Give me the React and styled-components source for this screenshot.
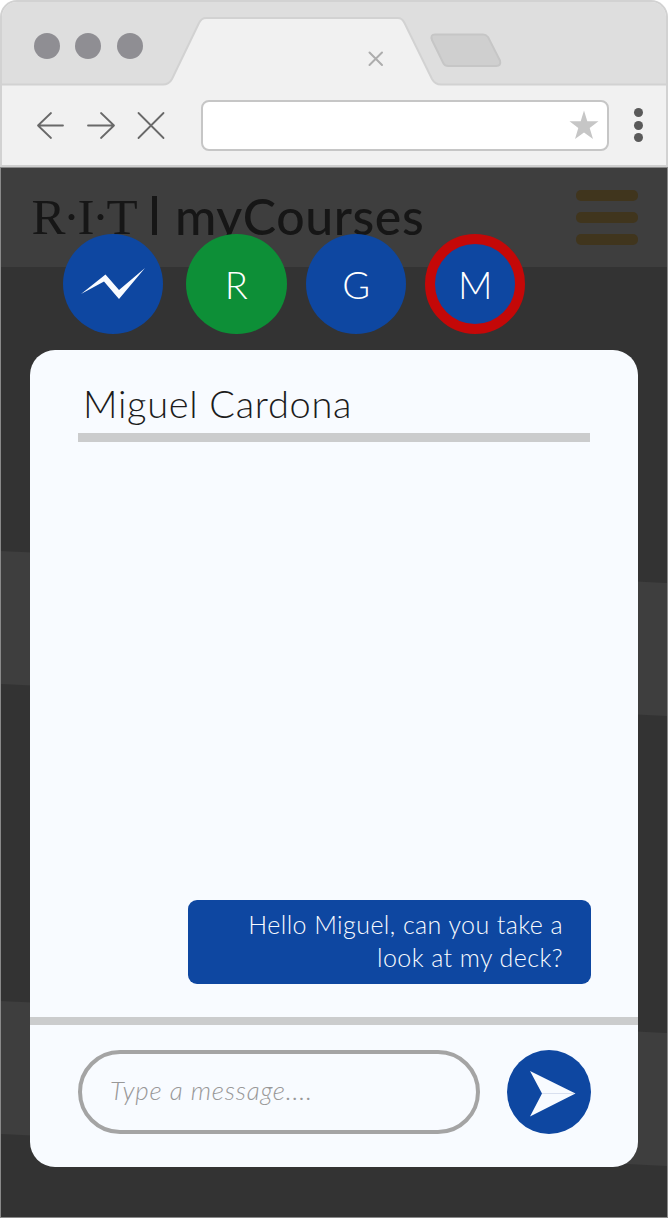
import React from 'react';
import styled, { createGlobalStyle } from 'styled-components';

const GlobalStyle = createGlobalStyle`
  * { box-sizing: border-box; }
  body { margin: 0; background: #fff; font-family: Lato, "Open Sans", sans-serif; font-weight: 300; }
`;

const Browser = styled.div`
  width: 668px;
  height: 1218px;
  display: flex;
  flex-direction: column;
  overflow: hidden;
`;

const Chrome = styled.header`
  flex: none;
  height: 167px;
  display: flex;
  flex-direction: column;
  position: relative;
  background: #f1f1f1;
  border: 2px solid #d2d2d2;
  border-bottom-color: #cfcfcf;
  border-radius: 17px 17px 0 0;
  overflow: hidden;
`;

const TabStrip = styled.div`
  height: 84px;
  flex: none;
  position: relative;
  background: #dedede;
`;

const TabShapes = styled.svg`
  position: absolute;
  left: -2px;
  top: -2px;
`;

const WindowDots = styled.div`
  display: flex;
  gap: 15.6px;
  padding: 31px 0 0 31.5px;
`;

const WindowDot = styled.span`
  width: 26px;
  height: 26px;
  border-radius: 50%;
  background: #8f8e93;
`;

const Toolbar = styled.div`
  flex: 1;
  display: flex;
  align-items: flex-start;
  padding: 14px 0 0 32px;
`;

const NavIcons = styled.svg`
  flex: none;
  margin-top: 8px;
`;

const AddressBar = styled.div`
  width: 408.5px;
  height: 50.5px;
  margin-left: 32.5px;
  display: flex;
  align-items: center;
  justify-content: flex-end;
  padding-right: 8px;
  background: #fff;
  border: 2px solid #c6c6c6;
  border-radius: 8px;
`;

const MenuDots = styled.div`
  display: flex;
  flex-direction: column;
  gap: 3.5px;
  margin: 8px 0 0 24.5px;
`;

const MenuDot = styled.span`
  width: 9px;
  height: 9px;
  border-radius: 50%;
  background: #5a5a5a;
`;

const Page = styled.main`
  flex: 1;
  position: relative;
  display: flex;
  flex-direction: column;
  background: #333;
  border: 1px solid #8a8a8a;
`;

const Band = styled.div`
  position: absolute;
  left: 0;
  right: 0;
  top: ${(p) => p.$top}px;
  height: 165px;
  background: #3e3e3e;
  clip-path: polygon(0 0, 100% 32px, 100% 100%, 0 133px);
`;

const SiteHeader = styled.div`
  flex: none;
  height: 99px;
  display: flex;
  align-items: flex-start;
  justify-content: space-between;
  padding: 0 29px 0 30.5px;
  background: #3e3e3e;
  position: relative;
`;

const Brand = styled.div`
  display: flex;
  color: #161616;
  white-space: nowrap;
`;

const School = styled.span`
  width: 120.5px;
  padding-top: 19px;
  font: 400 51px/60px "Liberation Serif", serif;
  letter-spacing: -2.5px;
`;

const Divider = styled.span`
  width: 4.5px;
  height: 39px;
  margin-top: 28px;
  background: #161616;
`;

const Product = styled.span`
  padding: 18px 0 0 18.5px;
  font-size: 50px;
  line-height: 60px;
  font-weight: 500;
  letter-spacing: 0.6px;
`;

const Burger = styled.div`
  display: flex;
  flex-direction: column;
  gap: 11px;
  margin-top: 22px;
`;

const BurgerLine = styled.span`
  width: 62.5px;
  height: 11px;
  border-radius: 5px;
  background: #40351d;
`;

const Contacts = styled.nav`
  position: relative;
  display: flex;
  flex: none;
  margin-top: -33.4px;
  padding-left: 62px;
`;

const Avatar = styled.div`
  width: 100.4px;
  height: 100.4px;
  margin-right: ${(p) => p.$gap || 0}px;
  display: flex;
  align-items: center;
  justify-content: center;
  border-radius: 50%;
  color: #fff;
  font-size: 38px;
  background: ${(p) => (p.$online ? '#0d8f37' : '#0e47a1')};
  border: ${(p) => (p.$active ? '10px solid #c40808' : 'none')};
`;

const Chat = styled.section`
  position: relative;
  flex: none;
  width: 608.5px;
  height: 817px;
  margin: 16px 0 0 28.5px;
  display: flex;
  flex-direction: column;
  background: #f8fbff;
  border-radius: 25px;
`;

const ChatTitle = styled.h1`
  flex: none;
  width: 512px;
  height: 92px;
  margin: 0 0 0 48.5px;
  padding: 30px 0 0 5px;
  border-bottom: 9px solid #cbcccd;
  color: #1c1c1c;
  font-size: 38px;
  line-height: 46px;
  font-weight: 300;
  letter-spacing: 0.7px;
`;

const Messages = styled.div`
  flex: 1;
  display: flex;
  flex-direction: column;
  justify-content: flex-end;
  align-items: flex-end;
  padding: 0 47px 33px;
`;

const Bubble = styled.p`
  margin: 0;
  width: 403px;
  height: 84px;
  padding: 8px 28px 0 0;
  border-radius: 9px;
  background: #0e47a1;
  color: #f8fbff;
  font-size: 25px;
  line-height: 33px;
  letter-spacing: 0.42px;
  text-align: right;
`;

const Composer = styled.div`
  flex: none;
  height: 150px;
  display: flex;
  gap: 27px;
  padding: 25px 0 0 48.5px;
  border-top: 8px solid #cbcccd;
`;

const MessageField = styled.div`
  width: 402px;
  height: 84px;
  padding: 17px 0 0 28px;
  border: 4.5px solid #a4a4a4;
  border-radius: 42px;
  color: #989898;
  font-size: 26px;
  line-height: 38px;
  font-style: italic;
  letter-spacing: 0.75px;
`;

const SendButton = styled.div`
  width: 84px;
  height: 84px;
  border-radius: 50%;
  background: #0e47a1;
`;

export default function App() {
  return (
    <>
      <GlobalStyle />
      <Browser>
        <Chrome>
          <TabStrip>
            <TabShapes width="668" height="87" viewBox="0 0 668 87" strokeWidth="2">
              <path
                d="M0 84.5H163Q169 84.5 172 79L199 23Q201.500 18 206 18H398Q402 18 404.500 23L432 79Q435 84.500 441 84.500H668V90H0Z"
                fill="#f1f1f1"
                stroke="#d2d2d2"
              />
              <path
                d="M435 34.500H483Q486 34.500 488 37L500 60.500Q501.500 66 496 66H448Q445 66 443.500 63.500L432 40Q430 34.500 435 34.500Z"
                fill="#cfcfcf"
                stroke="#c6c6c6"
              />
              <path d="M369.500 52.500L382 65M382 52.500L369.500 65" stroke="#adadad" strokeLinecap="round" fill="none" />
            </TabShapes>
            <WindowDots>
              <WindowDot />
              <WindowDot />
              <WindowDot />
            </WindowDots>
          </TabStrip>
          <Toolbar>
            <NavIcons width="134" height="34" viewBox="34 108 134 34" fill="none" stroke="#696969" strokeWidth="1.8" strokeLinecap="round" strokeLinejoin="round">
              <path d="M63 125.500H38M51 113L38 125.500L51 138" />
              <path d="M88 125.500H114M101 113L114 125.500L101 138" />
              <path d="M138.500 113L163.500 138M163.500 113L138.500 138" />
            </NavIcons>
            <AddressBar>
              <svg width="30" height="30" viewBox="569 111 30 30">
                <path d="M584 111.500L587.300 122.300H598.500L589.700 129L593 140L584 133.500L575 140L578.300 129L569.500 122.300H580.700Z" fill="#c6c6c6" />
              </svg>
            </AddressBar>
            <MenuDots>
              <MenuDot />
              <MenuDot />
              <MenuDot />
            </MenuDots>
          </Toolbar>
        </Chrome>
        <Page>
          <Band $top={383} />
          <Band $top={833} />
          <SiteHeader>
            <Brand>
              <School>R·I·T</School>
              <Divider />
              <Product>myCourses</Product>
            </Brand>
            <Burger>
              <BurgerLine />
              <BurgerLine />
              <BurgerLine />
            </Burger>
          </SiteHeader>
          <Contacts>
            <Avatar $gap={22.8}>
              <svg width="66" height="34" viewBox="80 267 66 34">
                <path d="M81 294L105.500 274.500L119 290L145 268L119 299L104 281.500Z" fill="#f8fbff" />
              </svg>
            </Avatar>
            <Avatar $online $gap={19.4}>R</Avatar>
            <Avatar $gap={18.7}>G</Avatar>
            <Avatar $active>M</Avatar>
          </Contacts>
          <Chat>
            <ChatTitle>Miguel Cardona</ChatTitle>
            <Messages>
              <Bubble>
                Hello Miguel, can you take a<br />look at my deck?
              </Bubble>
            </Messages>
            <Composer>
              <MessageField>Type a message....</MessageField>
              <SendButton>
                <svg width="84" height="84" viewBox="507 1050 84 84">
                  <path d="M530 1071L575.500 1093.500L530 1116.500L542 1093.500Z" fill="#f8fbff" />
                  <path d="M542 1093.500H575" stroke="#d9e0ef" />
                </svg>
              </SendButton>
            </Composer>
          </Chat>
        </Page>
      </Browser>
    </>
  );
}
